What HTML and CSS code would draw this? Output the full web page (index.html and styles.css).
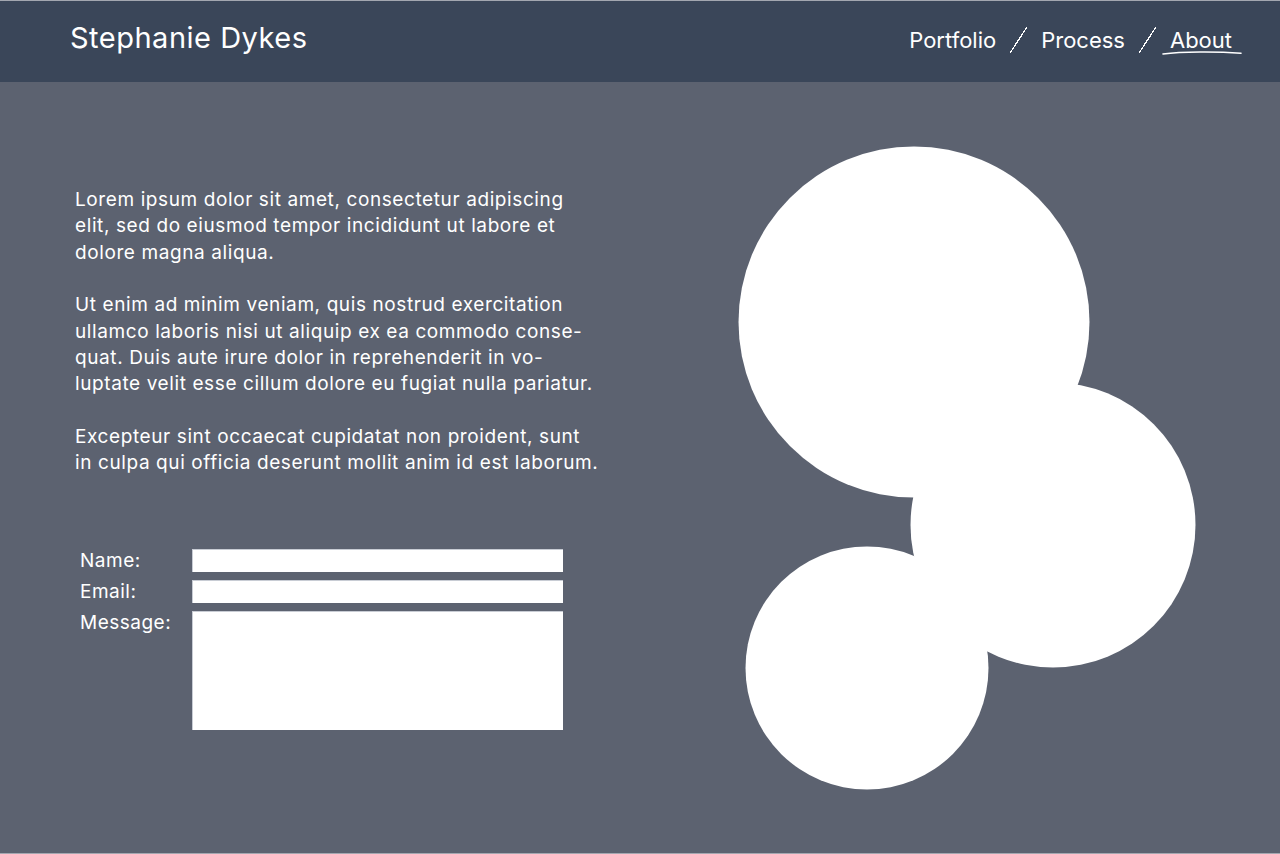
FILE: index.html
```html
<!DOCTYPE html>
<html>
<head>
<meta charset="utf-8">
<link rel="stylesheet" href="styles.css">
</head>
<body>
<div class="page">
  <header class="topbar">
    <div class="brand">Stephanie Dykes</div>
    <nav class="nav">
      <a class="nav-link">Portfolio</a>
      <span class="sep"></span>
      <a class="nav-link">Process</a>
      <span class="sep"></span>
      <a class="nav-link active">About
        <svg class="brush" viewBox="0 0 80 6" width="80" height="6"><path d="M1 4 C 20 1.5, 55 1.5, 79 3.2" stroke="#ffffff" stroke-width="1.6" fill="none" stroke-linecap="round"/></svg>
      </a>
    </nav>
  </header>
  <main class="content">
    <section class="left">
      <div class="copy">
        <p>Lorem ipsum dolor sit amet, consectetur adipiscing<br>elit, sed do eiusmod tempor incididunt ut labore et<br>dolore magna aliqua.</p>
        <p>Ut enim ad minim veniam, quis nostrud exercitation<br>ullamco laboris nisi ut aliquip ex ea commodo conse-<br>quat. Duis aute irure dolor in reprehenderit in vo-<br>luptate velit esse cillum dolore eu fugiat nulla pariatur.</p>
        <p>Excepteur sint occaecat cupidatat non proident, sunt<br>in culpa qui officia deserunt mollit anim id est laborum.</p>
      </div>
      <form class="form">
        <label class="lbl">Name:</label><input class="field" type="text">
        <label class="lbl">Email:</label><input class="field" type="text">
        <label class="lbl">Message:</label><textarea class="field area"></textarea>
      </form>
    </section>
    <section class="right">
      <svg class="bubbles" width="540" height="771" viewBox="0 0 540 771">
        <circle cx="194" cy="240" r="175.5" fill="#ffffff"/>
        <circle cx="333" cy="443" r="142.5" fill="#ffffff"/>
        <circle cx="147" cy="586" r="121.5" fill="#ffffff"/>
      </svg>
    </section>
  </main>
</div>
</body>
</html>
```
FILE: styles.css
```css
* { box-sizing: border-box; }
html, body { margin: 0; padding: 0; }
body {
  width: 1280px;
  height: 854px;
  overflow: hidden;
  background: #5c6270;
  font-family: "Inter", "Liberation Sans", sans-serif;
  color: #ffffff;
}
.page {
  height: 854px;
  border-top: 1px solid #a3a7b0;
  border-bottom: 1px solid #a3a7b0;
  display: flex;
  flex-direction: column;
}
.topbar {
  height: 81px;
  background: #3a4659;
  display: flex;
  align-items: flex-start;
  justify-content: space-between;
  padding: 0 38px 0 70px;
}
.brand {
  font-size: 29px;
  letter-spacing: 0.5px;
  margin-top: 19px;
}
.nav {
  display: flex;
  align-items: center;
  margin-top: 26px;
  gap: 13px;
}
.nav-link {
  font-size: 22px;
  position: relative;
}
.nav-link.active { padding: 0 10px 0 8px; margin-left: -8px; }
.sep {
  width: 17px;
  height: 26px;
  background: linear-gradient(to bottom right, transparent calc(50% - 0.6px), #ffffff calc(50% - 0.6px), #ffffff calc(50% + 0.6px), transparent calc(50% + 0.6px));
  margin: 0 1px;
}
.brush {
  position: absolute;
  left: 0;
  top: 23px;
}
.content {
  flex: 1;
  display: flex;
}
.left {
  width: 720px;
  padding: 105px 0 0 75px;
}
.copy p {
  margin: 0 0 26.5px;
  font-size: 19px;
  letter-spacing: 0.6px;
  line-height: 26.3px;
  white-space: nowrap;
}
.form {
  margin-top: 72px;
  margin-left: 5px;
  display: grid;
  grid-template-columns: 112px 371px;
  row-gap: 8px;
}
.lbl {
  font-size: 19px;
  letter-spacing: 0.5px;
  line-height: 23px;
}
.field {
  display: block;
  width: 371px;
  height: 23px;
  border: 0;
  border-top: 1px solid #c8ccd4;
  border-left: 1px solid #c8ccd4;
  background: #ffffff;
  margin: 0;
  padding: 0;
  resize: none;
}
.area { height: 119px; }
.right {
  flex: 1;
  position: relative;
}
.bubbles {
  display: block;
}
```
